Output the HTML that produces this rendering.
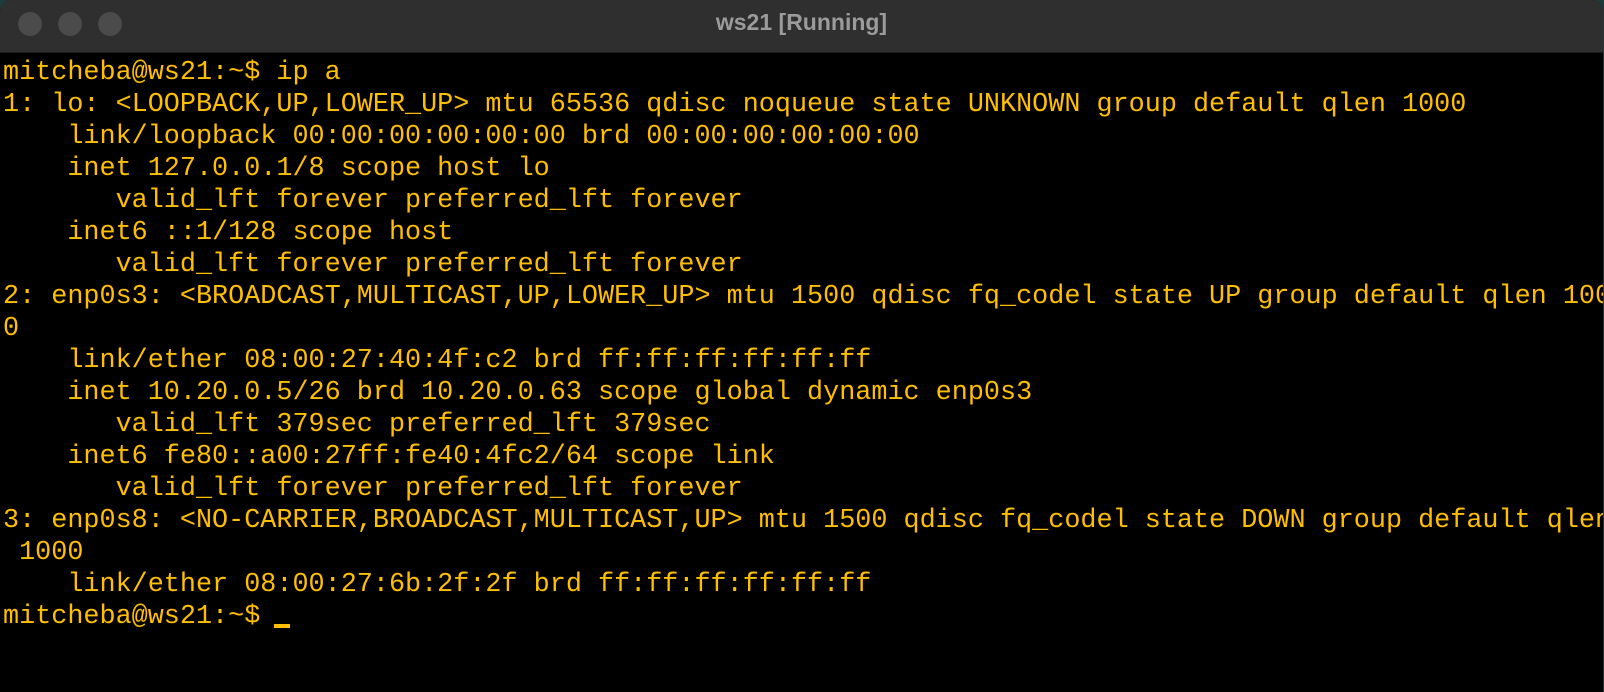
<!DOCTYPE html>
<html><head><meta charset="utf-8"><style>
html,body{margin:0;padding:0;width:1604px;height:692px;overflow:hidden;background:#1f3a3a;}
.win{position:absolute;left:0;top:0;width:1603px;height:692px;background:#000;border-radius:12px 12px 0 0;overflow:hidden;}
.bar{position:absolute;left:0;top:0;width:100%;height:52px;background:#2f2f2f;border-bottom:1px solid #1a1a1a;}
.dot{position:absolute;top:12px;width:24px;height:24px;border-radius:50%;background:#4b4b4b;}
.title{position:absolute;left:0;right:0;top:9px;text-align:center;font:bold 23px "Liberation Sans",sans-serif;color:#9b9b9b;}
pre{position:absolute;left:3px;top:57px;margin:0;font-family:"Liberation Mono",monospace;font-size:26.8px;line-height:32px;color:#ffbf00;white-space:pre;letter-spacing:0;}
.cur{position:absolute;left:274px;top:624px;width:16px;height:4px;background:#ffbf00;}
</style></head><body>
<div class="win">
<div class="bar"><div class="dot" style="left:18px"></div><div class="dot" style="left:58px"></div><div class="dot" style="left:98px"></div><div class="title">ws21 [Running]</div></div>
<pre>mitcheba@ws21:~$ ip a
1: lo: &lt;LOOPBACK,UP,LOWER_UP&gt; mtu 65536 qdisc noqueue state UNKNOWN group default qlen 1000
    link/loopback 00:00:00:00:00:00 brd 00:00:00:00:00:00
    inet 127.0.0.1/8 scope host lo
       valid_lft forever preferred_lft forever
    inet6 ::1/128 scope host
       valid_lft forever preferred_lft forever
2: enp0s3: &lt;BROADCAST,MULTICAST,UP,LOWER_UP&gt; mtu 1500 qdisc fq_codel state UP group default qlen 100
0
    link/ether 08:00:27:40:4f:c2 brd ff:ff:ff:ff:ff:ff
    inet 10.20.0.5/26 brd 10.20.0.63 scope global dynamic enp0s3
       valid_lft 379sec preferred_lft 379sec
    inet6 fe80::a00:27ff:fe40:4fc2/64 scope link
       valid_lft forever preferred_lft forever
3: enp0s8: &lt;NO-CARRIER,BROADCAST,MULTICAST,UP&gt; mtu 1500 qdisc fq_codel state DOWN group default qlen
 1000
    link/ether 08:00:27:6b:2f:2f brd ff:ff:ff:ff:ff:ff
mitcheba@ws21:~$ </pre>
<div class="cur"></div>
</div>
</body></html>
